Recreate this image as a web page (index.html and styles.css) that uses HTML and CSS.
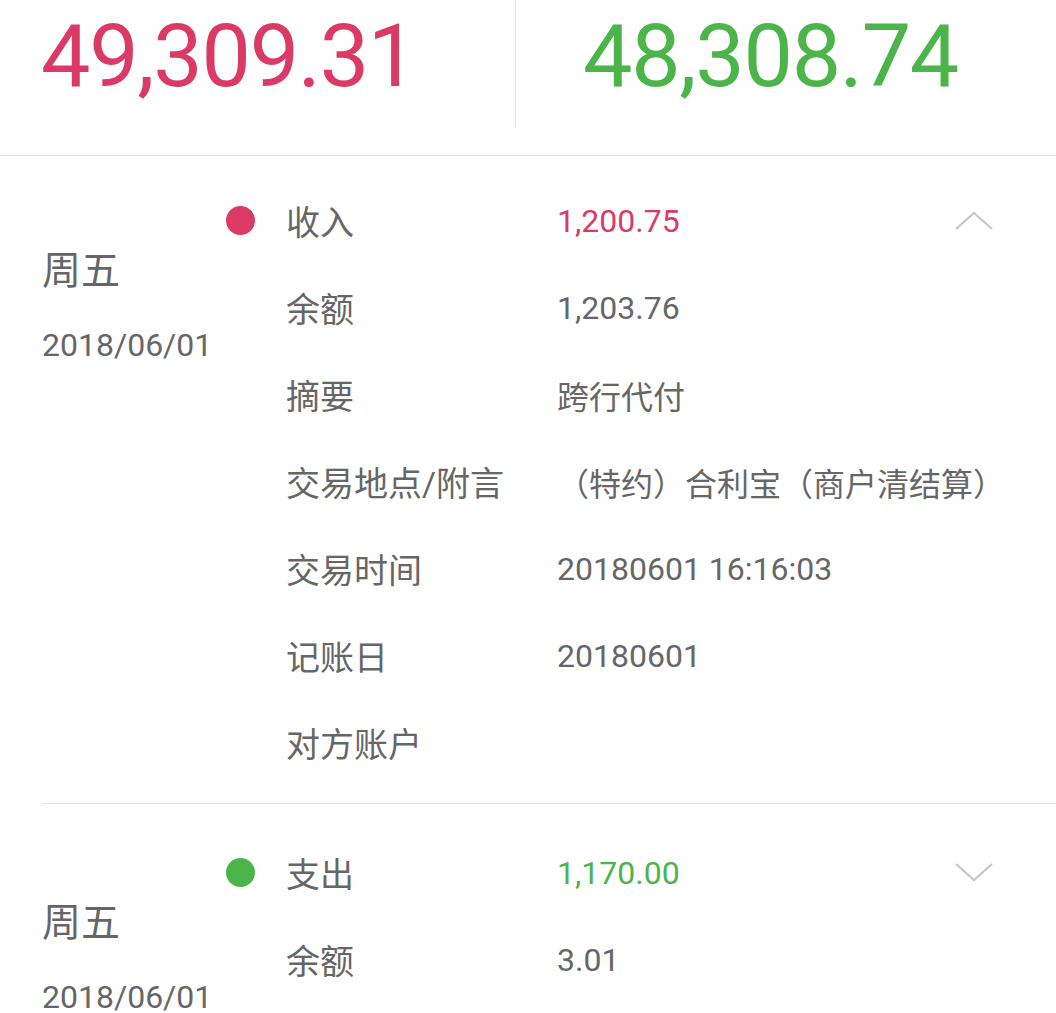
FILE: index.html
```html
<!DOCTYPE html>
<html lang="zh-CN">
<head>
    <meta charset="UTF-8">
    <meta name="viewport" content="width=device-width, initial-scale=1.0">
    <title>交易明细</title>
    <link rel="stylesheet" href="styles.css">
</head>
<body>
    <!-- 顶部汇总 -->
    <div class="summary">
        <div class="summary-item summary-in">49,309.31</div>
        <div class="summary-item summary-out">48,308.74</div>
    </div>

    <!-- 明细列表 -->
    <div class="record">
        <div class="record-date">
            <div class="weekday">周五</div>
            <div class="date">2018/06/01</div>
        </div>
        <div class="record-body">
            <div class="row">
                <span class="dot dot-in"></span>
                <span class="label">收入</span>
                <span class="value value-in">1,200.75</span>
                <svg class="arrow" width="38" height="19" viewBox="0 0 38 19">
                    <polyline points="1,18 19,2 37,18" fill="none" stroke="#c6c6c6" stroke-width="2.2" />
                </svg>
            </div>
            <div class="row">
                <span class="dot"></span>
                <span class="label">余额</span>
                <span class="value">1,203.76</span>
            </div>
            <div class="row">
                <span class="dot"></span>
                <span class="label">摘要</span>
                <span class="value">跨行代付</span>
            </div>
            <div class="row">
                <span class="dot"></span>
                <span class="label">交易地点/附言</span>
                <span class="value">（特约）合利宝（商户清结算）</span>
            </div>
            <div class="row">
                <span class="dot"></span>
                <span class="label">交易时间</span>
                <span class="value">20180601 16:16:03</span>
            </div>
            <div class="row">
                <span class="dot"></span>
                <span class="label">记账日</span>
                <span class="value">20180601</span>
            </div>
            <div class="row">
                <span class="dot"></span>
                <span class="label">对方账户</span>
                <span class="value"></span>
            </div>
        </div>
    </div>

    <div class="record record-second">
        <div class="record-date">
            <div class="weekday">周五</div>
            <div class="date">2018/06/01</div>
        </div>
        <div class="record-body">
            <div class="row">
                <span class="dot dot-out"></span>
                <span class="label">支出</span>
                <span class="value value-out">1,170.00</span>
                <svg class="arrow" width="38" height="19" viewBox="0 0 38 19">
                    <polyline points="1,1 19,17 37,1" fill="none" stroke="#c6c6c6" stroke-width="2.2" />
                </svg>
            </div>
            <div class="row">
                <span class="dot"></span>
                <span class="label">余额</span>
                <span class="value">3.01</span>
            </div>
        </div>
    </div>
</body>
</html>
```

FILE: styles.css
```css
body {
    margin: 0;
    background: #fff;
    font-family: Roboto, "Noto Sans CJK SC", sans-serif;
    color: #666;
    overflow: hidden;
}
/* 顶部汇总 */
.summary {
    display: flex;
    height: 155px;
    border-bottom: 1px solid #e2e2e2;
}
.summary-item {
    font-size: 88px;
    line-height: 1;
    padding-top: 12px;
    letter-spacing: -1.3px;
}
.summary-in {
    width: 516px;
    padding-left: 41px;
    box-sizing: border-box;
    color: #dc3a66;
    border-right: 1px solid #e2e2e2;
    height: 128px;
}
.summary-out {
    padding-left: 67px;
    color: #4cb54a;
}
/* 明细 */
.record {
    display: flex;
    margin-left: 42px;
    padding: 21px 0 17px;
}
.record-second {
    border-top: 1px solid #e2e2e2;
    padding-top: 25px;
}
.record-date {
    width: 184px;
    padding-top: 70px;
}
.weekday {
    font-size: 39px;
    line-height: 48px;
}
.date {
    font-size: 32px;
    line-height: 40px;
    margin-top: 30px;
}
.record-body {
    flex: 1;
}
.row {
    display: flex;
    align-items: center;
    height: 87px;
    font-size: 32px;
}
.dot {
    width: 29px;
    height: 29px;
    border-radius: 50%;
    margin-right: 31px;
    flex-shrink: 0;
}
.dot-in {
    background: #dc3a66;
}
.dot-out {
    background: #4cb54a;
}
.label {
    width: 271px;
    font-size: 34px;
}
.value {
    flex: 1;
}
.value-in {
    color: #dc3a66;
}
.value-out {
    color: #4cb54a;
}
.arrow {
    margin-right: 63px;
}
```
